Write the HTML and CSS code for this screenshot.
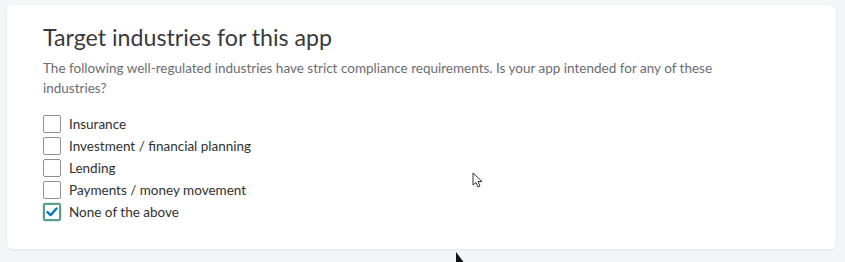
FILE: index.html
```html
<!DOCTYPE html>
<html lang="en">
<head>
  <meta charset="UTF-8">
  <meta name="viewport" content="width=device-width, initial-scale=1.0">
  <title>Target industries</title>
  <link rel="stylesheet" href="styles.css">
</head>
<body>
  <div class="card">
    <h2 class="title">Target industries for this app</h2>
    <p class="desc">The following well-regulated industries have strict compliance requirements. Is your app intended for any of these industries?</p>
    <div class="options">
      <label class="option"><span class="box"></span>Insurance</label>
      <label class="option"><span class="box"></span>Investment / financial planning</label>
      <label class="option"><span class="box"></span>Lending</label>
      <label class="option"><span class="box"></span>Payments / money movement</label>
      <label class="option checked">
        <span class="box">
          <svg width="12" height="10" viewBox="0 0 12 10"><path d="M1.5 5.2 L4.6 8.2 L10.5 1.5" fill="none" stroke="#0077c5" stroke-width="2.4" stroke-linecap="round" stroke-linejoin="round"/></svg>
        </span>None of the above
      </label>
    </div>
    <!-- mouse pointers in the screenshot -->
    <svg class="cursor cursor-hollow" width="12" height="17" viewBox="0 0 12 17"><path d="M1 1 L1 13 L4 10.5 L6 15 L8 14 L6 9.5 L10 9.5 Z" fill="#fff" stroke="#333" stroke-width="1"/></svg>
  </div>
  <svg class="cursor cursor-solid" width="12" height="12" viewBox="0 0 12 12"><path d="M1 0 L1 12 L10 12 Z" fill="#111"/></svg>
</body>
</html>
```

FILE: styles.css
```css
body {
  margin: 0;
  background: #f4f5f8;
  font-family: Lato, "Noto Sans", sans-serif;
  height: 262px;
  overflow: hidden;
  position: relative;
}
.card {
  position: relative;
  margin: 5px 9px 0 7px;
  height: 244px;
  box-sizing: border-box;
  background: #fff;
  border-radius: 6px;
  box-shadow: 0 1px 3px rgba(0, 0, 0, 0.08);
  padding: 17px 36px 0;
}
.title {
  margin: 0;
  font-size: 23.2px;
  font-weight: 400;
  line-height: 30px;
  color: #393a3d;
}
.desc {
  margin: 6px 0 0;
  font-size: 13.5px;
  line-height: 20px;
  color: #6b6c72;
  max-width: 690px;
}
.options {
  margin-top: 17px;
  display: flex;
  flex-direction: column;
  gap: 4px;
}
.option {
  display: flex;
  align-items: center;
  gap: 8px;
  font-size: 13.5px;
  line-height: 18px;
  color: #2f3033;
}
.box {
  width: 18px;
  height: 18px;
  box-sizing: border-box;
  border: 1px solid #8d9096;
  border-radius: 2px;
  display: flex;
  align-items: center;
  justify-content: center;
}
.option.checked .box {
  border: 2px solid #5a9e8a;
  box-shadow: 0 0 0 1px #d6ece4;
}
.cursor {
  position: absolute;
}
.cursor-hollow {
  left: 465px;
  top: 167px;
}
.cursor-solid {
  left: 455px;
  top: 252px;
}
```
